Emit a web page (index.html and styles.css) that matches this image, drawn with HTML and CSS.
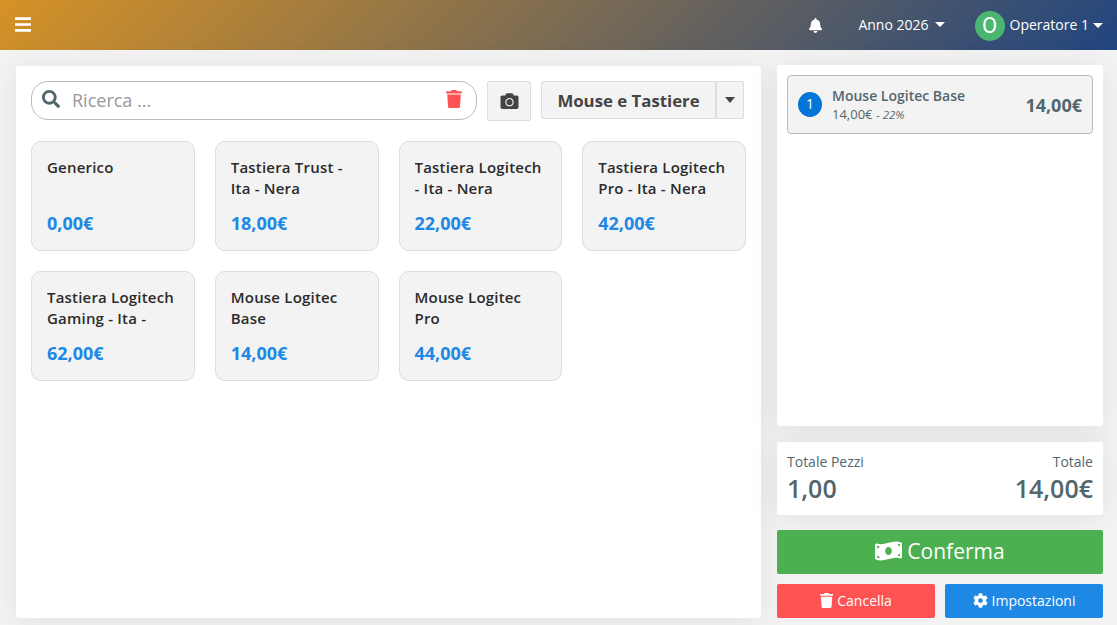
FILE: index.html
```html
<!DOCTYPE html>
<html lang="it">
<head>
  <meta charset="UTF-8" />
  <meta name="viewport" content="width=device-width, initial-scale=1.0" />
  <title>Vendita al banco</title>
  <link rel="stylesheet" href="styles.css">
</head>
<body>
  <header class="topbar">
    <svg class="icon-bars" viewBox="0 0 448 512" preserveAspectRatio="none"><path d="M16 132h416c8.800 0 16-7.200 16-16V76c0-8.800-7.200-16-16-16H16C7.200 60 0 67.200 0 76v40c0 8.800 7.200 16 16 16zm0 160h416c8.800 0 16-7.200 16-16v-40c0-8.800-7.200-16-16-16H16c-8.800 0-16 7.200-16 16v40c0 8.800 7.200 16 16 16zm0 160h416c8.800 0 16-7.200 16-16v-40c0-8.800-7.200-16-16-16H16c-8.800 0-16 7.200-16 16v40c0 8.800 7.200 16 16 16z"/></svg>
    <nav class="topbar-menu">
      <svg class="icon-bell" viewBox="0 0 448 512"><path d="M224 512c35.320 0 63.970-28.650 63.970-64H160.030c0 35.350 28.650 64 63.970 64zm215.390-149.710c-19.320-20.760-55.470-51.990-55.470-154.290 0-77.700-54.480-139.900-127.940-155.160V32c0-17.670-14.320-32-31.980-32s-31.980 14.330-31.980 32v20.840C118.560 68.100 64.080 130.300 64.080 208c0 102.300-36.150 133.530-55.470 154.290-6 6.450-8.660 14.160-8.610 21.710.11 16.400 12.980 32 32.100 32h383.800c19.120 0 32-15.600 32.100-32 .05-7.550-2.610-15.270-8.610-21.710z"/></svg>
      <div class="year">Anno 2026 <i class="caret"></i></div>
      <div class="user"><span class="avatar">O</span>Operatore 1 <i class="caret"></i></div>
    </nav>
  </header>

  <main class="page">
    <!-- Catalogo -->
    <section class="panel catalog">
      <div class="toolbar">
        <div class="search">
          <svg class="icon-search" viewBox="0 0 512 512"><path d="M505 442.700L405.300 343c-4.500-4.500-10.600-7-17-7H372c27.600-35.300 44-79.700 44-128C416 93.100 322.900 0 208 0S0 93.100 0 208s93.100 208 208 208c48.300 0 92.700-16.400 128-44v16.300c0 6.400 2.500 12.500 7 17l99.700 99.700c9.400 9.400 24.600 9.400 33.900 0l28.300-28.300c9.400-9.400 9.400-24.600.1-34zM208 336c-70.700 0-128-57.200-128-128 0-70.700 57.200-128 128-128 70.700 0 128 57.200 128 128 0 70.700-57.200 128-128 128z"/></svg>
          <input type="text" placeholder="Ricerca ...">
          <svg class="icon-clear" viewBox="0 0 448 512"><path d="M432 32H312l-9.400-18.700A24 24 0 0 0 281.100 0H166.800a23.720 23.720 0 0 0-21.400 13.300L136 32H16A16 16 0 0 0 0 48v32a16 16 0 0 0 16 16h416a16 16 0 0 0 16-16V48a16 16 0 0 0-16-16zM53.200 467a48 48 0 0 0 47.900 45h245.800a48 48 0 0 0 47.900-45L416 128H32z"/></svg>
        </div>
        <button class="btn-camera">
          <svg viewBox="0 0 512 512"><path d="M512 144v288c0 26.500-21.500 48-48 48H48c-26.500 0-48-21.500-48-48V144c0-26.500 21.500-48 48-48h88l12.300-32.900c7-18.700 24.900-31.100 44.900-31.100h125.500c20 0 37.900 12.400 44.900 31.100L376 96h88c26.500 0 48 21.500 48 48zM376 288c0-66.200-53.800-120-120-120s-120 53.800-120 120 53.800 120 120 120 120-53.800 120-120zm-32 0c0 48.500-39.500 88-88 88s-88-39.500-88-88 39.500-88 88-88 88 39.500 88 88z"/></svg>
        </button>
        <div class="category">
          <button class="category-name">Mouse e Tastiere</button>
          <button class="category-toggle"><i class="caret"></i></button>
        </div>
      </div>

      <div class="products">
        <div class="product">
          <div class="product-name">Generico</div>
          <div class="product-price">0,00€</div>
        </div>
        <div class="product">
          <div class="product-name">Tastiera Trust - Ita - Nera</div>
          <div class="product-price">18,00€</div>
        </div>
        <div class="product">
          <div class="product-name">Tastiera Logitech - Ita - Nera</div>
          <div class="product-price">22,00€</div>
        </div>
        <div class="product">
          <div class="product-name">Tastiera Logitech Pro - Ita - Nera</div>
          <div class="product-price">42,00€</div>
        </div>
        <div class="product">
          <div class="product-name">Tastiera Logitech Gaming - Ita -</div>
          <div class="product-price">62,00€</div>
        </div>
        <div class="product">
          <div class="product-name">Mouse Logitec Base</div>
          <div class="product-price">14,00€</div>
        </div>
        <div class="product">
          <div class="product-name">Mouse Logitec Pro</div>
          <div class="product-price">44,00€</div>
        </div>
      </div>
    </section>

    <!-- Carrello -->
    <aside class="cart">
      <div class="panel cart-list">
        <div class="cart-item">
          <span class="qty">1</span>
          <div class="cart-info">
            <div class="cart-name">Mouse Logitec Base</div>
            <div class="cart-detail">14,00€ <small>- <em>22%</em></small></div>
          </div>
          <div class="cart-price">14,00€</div>
        </div>
      </div>

      <div class="panel totals">
        <div>
          <div class="total-label">Totale Pezzi</div>
          <div class="total-value">1,00</div>
        </div>
        <div class="total-right">
          <div class="total-label">Totale</div>
          <div class="total-value">14,00€</div>
        </div>
      </div>

      <button class="btn btn-confirm">
        <svg viewBox="0 0 640 512"><path d="M621.160 54.460C582.370 38.190 543.550 32 504.750 32c-123.170-.01-246.330 62.340-369.500 62.340-30.890 0-61.760-3.920-92.650-13.720-3.470-1.100-6.950-1.620-10.350-1.620C15.040 79 0 92.320 0 110.810v317.260c0 12.630 7.230 24.600 18.840 29.460C57.630 473.810 96.450 480 135.250 480c123.170 0 246.340-62.350 369.510-62.350 30.890 0 61.760 3.920 92.650 13.720 3.470 1.100 6.950 1.620 10.350 1.620 17.210 0 32.250-13.320 32.250-31.810V83.930c-.01-12.640-7.240-24.600-18.850-29.470zM48 132.220c20.120 5.040 41.120 7.570 62.720 8.930C104.840 170.540 79 192.690 48 192.690v-60.470zm0 285v-47.780c34.370 0 62.180 27.270 63.710 61.400-22.530-1.810-43.590-6.310-63.710-13.620zM320 352c-44.190 0-80-42.990-80-96 0-53.020 35.820-96 80-96s80 42.980 80 96c0 53.030-35.830 96-80 96zm272 27.780c-17.520-4.390-35.710-6.850-54.320-8.440 5.870-26.080 27.500-45.880 54.320-49.280v57.720zm0-236.110c-30.890-3.910-54.860-29.700-55.810-61.550 19.540 2.170 38.090 6.230 55.810 12.660v48.890z"/></svg>
        Conferma
      </button>
      <div class="actions">
        <button class="btn btn-cancel">
          <svg viewBox="0 0 448 512"><path d="M432 32H312l-9.400-18.700A24 24 0 0 0 281.100 0H166.800a23.720 23.720 0 0 0-21.400 13.300L136 32H16A16 16 0 0 0 0 48v32a16 16 0 0 0 16 16h416a16 16 0 0 0 16-16V48a16 16 0 0 0-16-16zM53.200 467a48 48 0 0 0 47.900 45h245.800a48 48 0 0 0 47.900-45L416 128H32z"/></svg>
          Cancella
        </button>
        <button class="btn btn-settings">
          <svg viewBox="0 0 512 512"><path d="M487.400 315.700l-42.600-24.600c4.300-23.200 4.300-47 0-70.200l42.600-24.600c4.900-2.800 7.100-8.600 5.500-14-11.100-35.600-30-67.800-54.700-94.600-3.800-4.100-10-5.100-14.800-2.300L380.800 110c-17.900-15.400-38.500-27.300-60.800-35.100V25.800c0-5.600-3.900-10.500-9.400-11.700-36.700-8.200-74.300-7.800-109.200 0-5.500 1.200-9.400 6.100-9.400 11.700V75c-22.200 7.900-42.800 19.800-60.800 35.100L88.700 85.500c-4.900-2.800-11-1.900-14.800 2.300-24.700 26.700-43.600 58.900-54.700 94.600-1.700 5.400.6 11.200 5.500 14L67.300 221c-4.300 23.200-4.300 47 0 70.200l-42.600 24.600c-4.900 2.800-7.100 8.600-5.500 14 11.100 35.600 30 67.800 54.700 94.600 3.800 4.100 10 5.100 14.800 2.300l42.600-24.600c17.900 15.400 38.500 27.300 60.800 35.100v49.200c0 5.600 3.900 10.500 9.400 11.700 36.700 8.200 74.300 7.800 109.200 0 5.500-1.200 9.400-6.100 9.400-11.700v-49.200c22.200-7.900 42.800-19.800 60.800-35.100l42.600 24.600c4.900 2.800 11 1.900 14.800-2.300 24.700-26.700 43.600-58.900 54.700-94.600 1.500-5.500-.7-11.300-5.600-14.100zM256 336c-44.100 0-80-35.900-80-80s35.900-80 80-80 80 35.900 80 80-35.900 80-80 80z"/></svg>
          Impostazioni
        </button>
      </div>
    </aside>
  </main>
</body>
</html>
```
FILE: styles.css
```css
* {
  box-sizing: border-box;
}
body {
  margin: 0;
  height: 100vh;
  overflow: hidden;
  display: flex;
  flex-direction: column;
  font-family: 'Open Sans', sans-serif;
  font-size: 14px;
  color: #54666d;
  background-color: #f3f3f3;
}
button, input {
  font-family: inherit;
}
svg {
  fill: currentColor;
  flex-shrink: 0;
}

/* Barra superiore */
.topbar {
  height: 50px;
  flex-shrink: 0;
  display: flex;
  align-items: center;
  justify-content: space-between;
  padding: 0 14px 0 15px;
  color: #fff;
  background: linear-gradient(135deg, #d69226 0%, #21457f 100%);
}
.icon-bars {
  width: 16px;
  height: 19px;
  margin-bottom: 2px;
}
.topbar-menu {
  display: flex;
  align-items: center;
}
.icon-bell {
  width: 13px;
  height: 15px;
}
.year, .user {
  display: flex;
  align-items: center;
}
.year {
  margin: 0 30px 2px 36px;
}
.user {
  line-height: 18px;
}
.avatar {
  width: 30px;
  height: 30px;
  margin: 2px 5px 0 0;
  border-radius: 50%;
  background-color: #4bb572;
  font-family: Roboto, sans-serif;
  font-size: 22px;
  line-height: 30px;
  text-align: center;
}
.caret {
  margin-left: 6px;
  border: 5px solid transparent;
  border-top-color: currentColor;
  border-bottom: 0;
}
.user .caret {
  margin-left: 4px;
}

/* Contenuto */
.page {
  flex: 1;
  min-height: 0;
  display: flex;
  gap: 16px;
  padding: 15px 14px 7px 16px;
}
.panel {
  background-color: #fff;
  border-radius: 3px;
  box-shadow: 0 2px 30px rgba(0, 0, 0, 0.08);
}
.catalog {
  flex: 1;
  margin-top: 1px;
  padding: 15px;
}
.toolbar {
  display: flex;
  align-items: flex-start;
  height: 60px;
}
.search {
  width: 446px;
  height: 39px;
  display: flex;
  align-items: center;
  padding: 0 14px 2px 10px;
  border: 1px solid #bbb;
  border-radius: 17px;
}
.icon-search {
  width: 18px;
  height: 18px;
  margin-bottom: 1px;
}
.search input {
  flex: 1;
  min-width: 0;
  padding: 0 0 0 12px;
  border: 0;
  outline: 0;
  background: none;
  font-size: 18px;
}
.search input::placeholder {
  color: #999;
}
.icon-clear {
  width: 16px;
  height: 18px;
  margin-bottom: 1px;
  color: #ff5252;
}
.btn-camera, .category button {
  display: flex;
  align-items: center;
  justify-content: center;
  padding: 0;
  color: #444;
  background-color: #f3f3f3;
  border: 1px solid #ddd;
}
.btn-camera {
  width: 44px;
  height: 40px;
  margin: 0 10px;
  border-radius: 2px;
}
.btn-camera svg {
  width: 19px;
  height: 18px;
}
.category {
  display: flex;
  height: 38px;
}
.category .category-name {
  width: 175px;
  border-radius: 2px 0 0 2px;
  font-size: 16.8px;
  font-weight: 700;
}
.category .category-toggle {
  width: 28px;
  border-radius: 0 2px 2px 0;
}
.category .caret {
  margin: 0;
  border-width: 6px 5px 0;
}

/* Prodotti */
.products {
  display: grid;
  grid-template-columns: repeat(4, 1fr);
  grid-auto-rows: 110px;
  gap: 20px;
}
.product {
  padding: 15px;
  background-color: #f3f3f3;
  border: 1px solid #ddd;
  border-radius: 10px;
}
.product-name {
  height: 42px;
  margin-bottom: 12px;
  overflow: hidden;
  color: #2b2b2b;
  font-size: 15px;
  font-weight: 600;
  line-height: 21px;
  letter-spacing: 0.2px;
}
.product-price {
  color: #1e88e5;
  font-size: 18px;
  font-weight: 700;
  line-height: 25px;
}

/* Carrello */
.cart {
  width: 326px;
  display: flex;
  flex-direction: column;
}
.cart-list {
  flex: 1;
  margin-bottom: 16px;
  padding: 10px;
}
.cart-item {
  height: 59px;
  display: flex;
  align-items: center;
  padding: 0 10px;
  background-color: #f3f3f3;
  border: 1px solid #bbb;
  border-radius: 4px;
}
.qty {
  width: 24px;
  height: 25px;
  margin-right: 10px;
  border-radius: 50%;
  background-color: #0275d8;
  color: #fff;
  line-height: 24px;
  text-align: center;
}
.cart-info {
  flex: 1;
}
.cart-name {
  font-weight: 600;
  line-height: 20px;
}
.cart-detail {
  font-size: 13px;
  line-height: 17px;
}
.cart-detail small {
  font-size: 11.5px;
}
.cart-price {
  font-size: 18px;
  font-weight: 700;
}
.totals {
  height: 73px;
  display: flex;
  justify-content: space-between;
  margin-bottom: 15px;
  padding: 10px;
}
.total-right {
  text-align: right;
}
.total-label {
  line-height: 20px;
}
.total-value {
  font-size: 25px;
  font-weight: 600;
  line-height: 32px;
}
.btn {
  display: flex;
  align-items: center;
  justify-content: center;
  gap: 4px;
  padding: 0 0 2px;
  border: 0;
  border-radius: 2px;
  color: #fff;
  font-size: 14px;
}
.btn-confirm {
  height: 44px;
  margin-bottom: 10px;
  gap: 5px;
  background-color: #4caf50;
  font-size: 21px;
}
.btn-confirm svg {
  width: 27px;
  height: 22px;
}
.actions {
  display: flex;
  gap: 10px;
}
.actions .btn {
  flex: 1;
  height: 34px;
}
.actions svg {
  height: 15px;
  margin-top: 1px;
}
.btn-cancel {
  background-color: #ff5252;
}
.btn-settings {
  background-color: #1e88e5;
}
```
